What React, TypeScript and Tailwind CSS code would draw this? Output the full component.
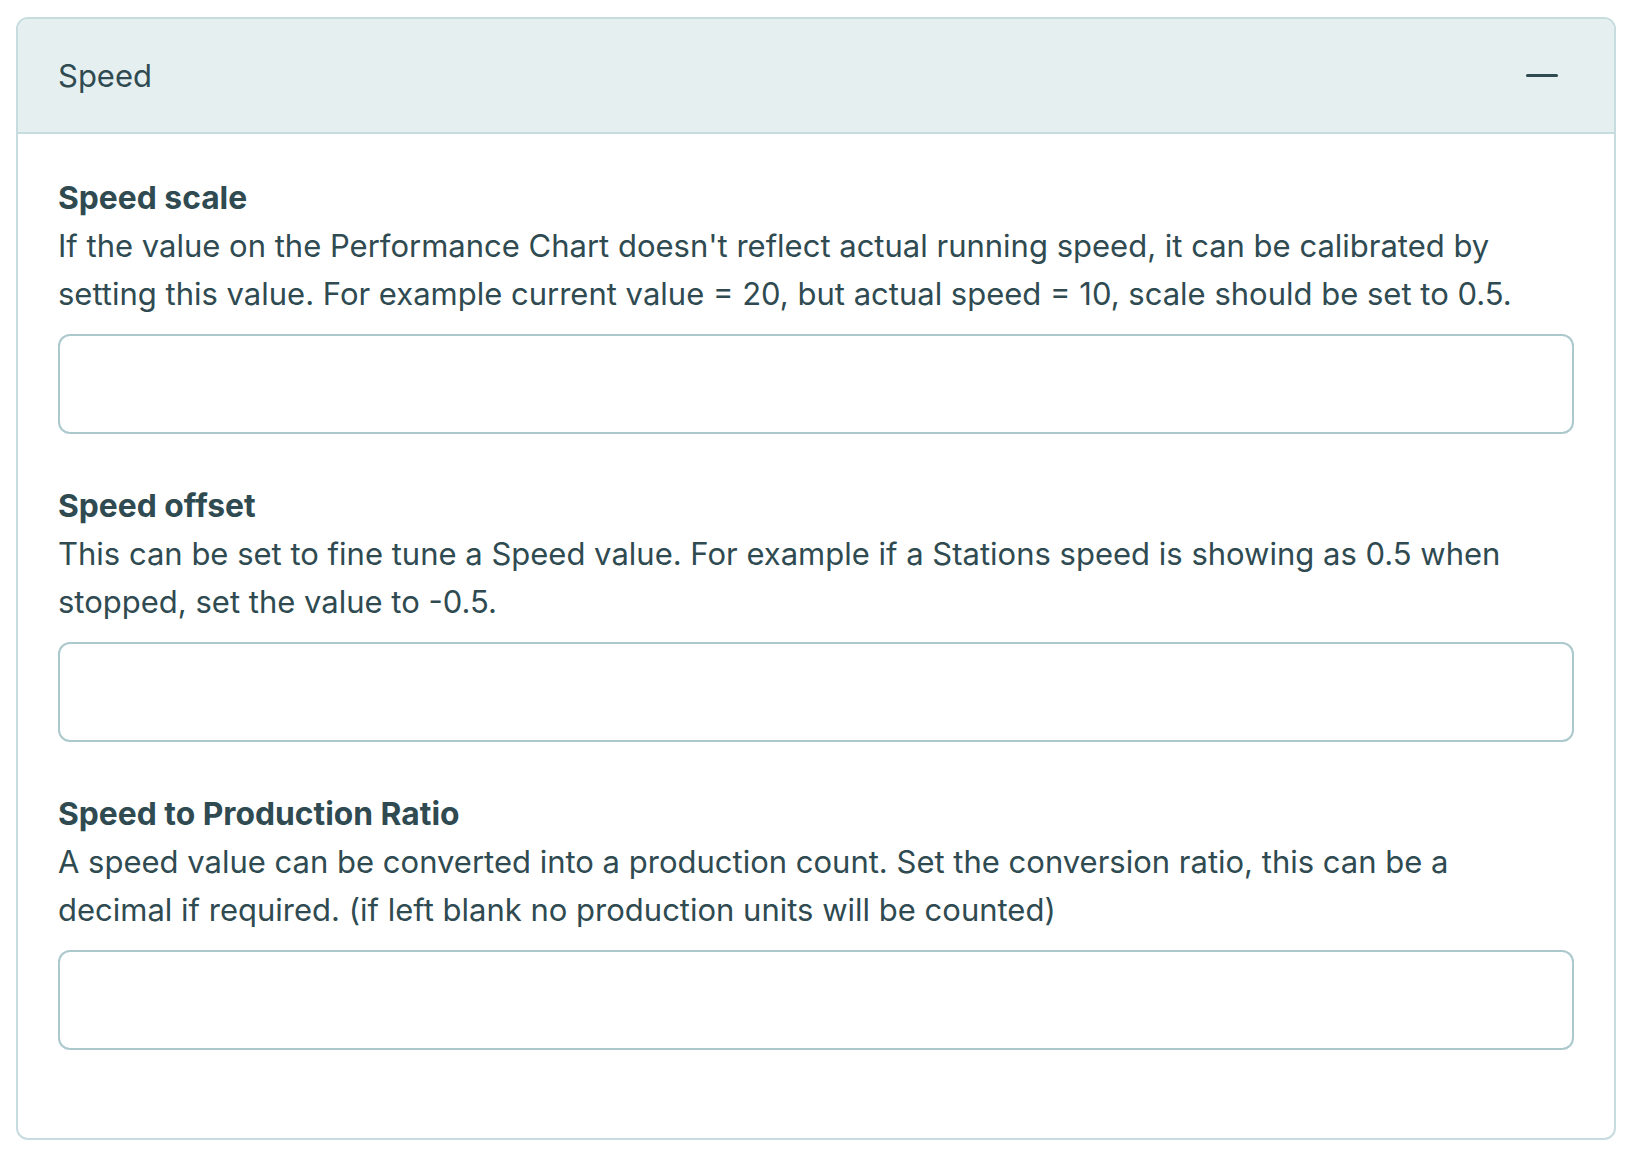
const fieldLabelClass = "text-[31.8px] font-bold leading-[48px]";
const fieldHelpClass = "text-[31px] leading-[48px]";
const inputClass =
  "mt-4 block h-[100px] w-full rounded-xl border-2 border-[#abc8cc] bg-white px-5 text-[31px] text-[#2f4b51] outline-none";

type SpeedField = {
  id: string;
  label: string;
  help: string[];
};

const speedFields: SpeedField[] = [
  {
    id: "speed-scale",
    label: "Speed scale",
    help: [
      "If the value on the Performance Chart doesn't reflect actual running speed, it can be calibrated by",
      "setting this value. For example current value = 20, but actual speed = 10, scale should be set to 0.5.",
    ],
  },
  {
    id: "speed-offset",
    label: "Speed offset",
    help: [
      "This can be set to fine tune a Speed value. For example if a Stations speed is showing as 0.5 when",
      "stopped, set the value to -0.5.",
    ],
  },
  {
    id: "speed-ratio",
    label: "Speed to Production Ratio",
    help: [
      "A speed value can be converted into a production count. Set the conversion ratio, this can be a",
      "decimal if required. (if left blank no production units will be counted)",
    ],
  },
];

export default function App() {
  return (
    <div
      className="min-h-[1168px] bg-white pl-4 pt-[17px] text-[#2f4b51]"
      style={{ fontFamily: "Inter, 'Noto Sans', sans-serif" }}
    >
      <section className="w-[1600px] overflow-hidden rounded-xl border-2 border-[#c6dcdf]">
        {/* Accordion header */}
        <button
          type="button"
          className="flex h-[115px] w-full items-center justify-between border-b-2 border-[#c6dcdf] bg-[#e5eff0] pl-10 pr-[56px] text-left"
        >
          <span className="text-[31px] leading-none">Speed</span>
          <span className="block h-[3px] w-8 rounded-full bg-[#2f4b51]" />
        </button>

        {/* Accordion body */}
        <div className="px-10 pt-10 pb-10">
          {speedFields.map((field) => (
            <div key={field.id} className="mb-12">
              <label htmlFor={field.id} className={`block ${fieldLabelClass}`}>
                {field.label}
              </label>
              <p className={fieldHelpClass}>
                {field.help.map((line, i) => (
                  <span key={i} className="block whitespace-nowrap">
                    {line}
                  </span>
                ))}
              </p>
              <input id={field.id} type="text" className={inputClass} />
            </div>
          ))}
        </div>
      </section>
    </div>
  );
}
